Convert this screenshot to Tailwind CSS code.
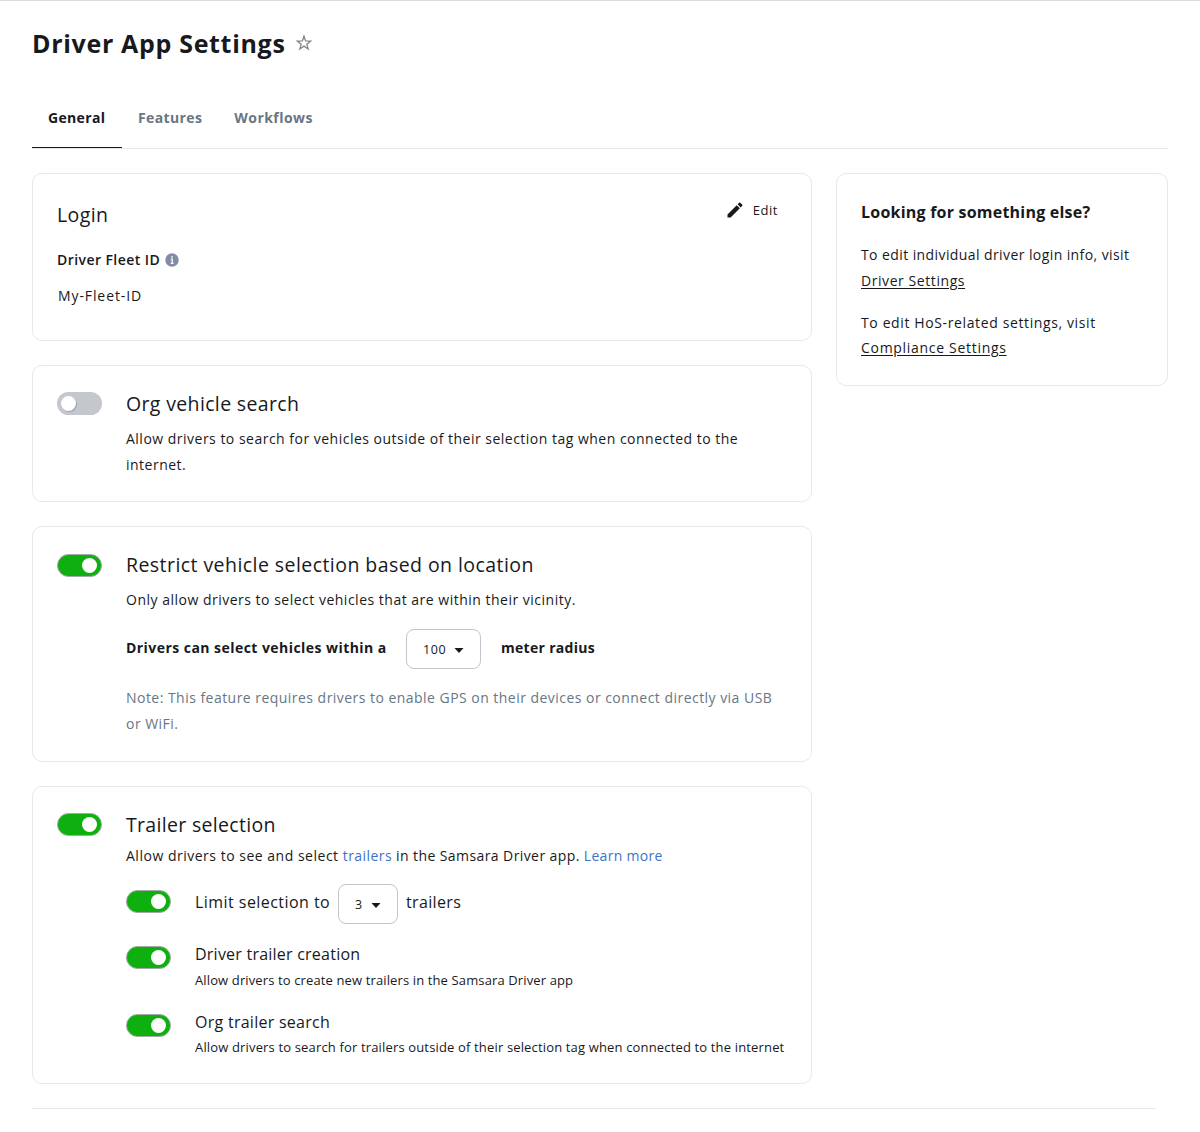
<!DOCTYPE html>
<html lang="en">
<head>
<meta charset="utf-8">
<title>Driver App Settings</title>
<script src="https://cdn.jsdelivr.net/npm/@tailwindcss/browser@4"></script>
</head>
<body class="bg-white">
<div class="flex h-[1132px] w-[1200px] flex-col overflow-hidden border-t border-[#dcdcdc] px-8 font-['Open_Sans',sans-serif] text-sm whitespace-nowrap text-[#17191d]">
  <header class="flex h-[88px] items-start pt-6">
    <h1 class="text-[25px] leading-9 font-bold tracking-[0.68px]">Driver App Settings</h1>
    <svg class="mt-[9px] ml-[10px] h-[18px] w-[18px]" viewBox="0 0 18 18" fill="none" stroke="#858585" stroke-width="1.3" stroke-linejoin="miter"><path d="M9 2.2l1.7 4.7 5 .15-3.95 3.1 1.4 4.8L9 12.1l-4.15 2.85 1.4-4.8-3.95-3.1 5-.15z"/></svg>
  </header>
  <nav class="flex h-[60px] border-b border-[#e6e9ec] font-semibold text-[#687684]">
    <a class="h-[59px] w-[90px] border-b border-[#17191d] pt-[19px] pl-4 leading-5 font-bold tracking-[0.33px] text-[#17191d]">General</a>
    <a class="ml-4 pt-[19px] leading-5 font-bold tracking-[0.38px]">Features</a>
    <a class="ml-8 pt-[19px] leading-5 font-bold tracking-[0.45px]">Workflows</a>
  </nav>

  <main class="mt-6 flex items-start gap-6">
    <div class="flex w-[780px] flex-col">
      <section class="flex h-[168px] justify-between rounded-[10px] border border-[#e8e9eb] pl-6">
        <div>
          <h2 class="mt-[27px] text-[19.5px] leading-7 tracking-[0.4px]">Login</h2>
          <div class="mt-[21px] flex items-center gap-[5px]">
            <span class="leading-5 font-semibold tracking-[0.43px]">Driver Fleet ID</span>
            <svg class="h-[14px] w-[14px]" viewBox="0 0 14 14"><circle cx="7" cy="7" r="6.7" fill="#7f8ca3"/><path d="M7 3.1v1.7M5.8 6.2H7.2v4M5.6 10.4h3" fill="none" stroke="#fff" stroke-width="1.3"/></svg>
          </div>
          <p class="mt-4 ml-px leading-5 tracking-[0.9px]">My-Fleet-ID</p>
        </div>
        <button class="mt-[26px] mr-[33px] flex h-5 items-center gap-2 text-[13px] leading-5 tracking-[0.55px]">
          <svg class="h-5 w-5" viewBox="0 0 24 24" fill="#17191d"><path d="M3 17.25V21h3.75L17.81 9.94l-3.75-3.75L3 17.25zM20.71 7.04a1 1 0 0 0 0-1.41l-2.34-2.34a1 1 0 0 0-1.41 0l-1.83 1.83 3.75 3.75 1.83-1.83z"/></svg>
          Edit
        </button>
      </section>

      <section class="mt-6 flex h-[137px] rounded-[10px] border border-[#e8e9eb] pl-6">
        <div class="mt-[26px] h-[23px] w-[45px] rounded-full bg-[#c4c7cc] p-[4px]"><div class="h-[15px] w-[15px] rounded-full bg-white shadow-[1px_1px_0_#94a3bd]"></div></div>
        <div class="ml-6">
          <h2 class="mt-6 text-[19.5px] leading-7 tracking-[0.35px]">Org vehicle search</h2>
          <p class="mt-2 leading-[26px] tracking-[0.49px]">Allow drivers to search for vehicles outside of their selection tag when connected to the<br>internet.</p>
        </div>
      </section>

      <section class="mt-6 flex h-[236px] rounded-[10px] border border-[#e8e9eb] pl-6">
        <div class="mt-[27px] flex h-[23px] w-[45px] justify-end rounded-full border border-[#a4aaa8] bg-[#0eb010] px-[4px] py-[3px]"><div class="h-[15px] w-[15px] rounded-full bg-white"></div></div>
        <div class="ml-6">
          <h2 class="mt-6 text-[19.5px] leading-7 tracking-[0.44px]">Restrict vehicle selection based on location</h2>
          <p class="mt-2 leading-[26px] tracking-[0.5px]">Only allow drivers to select vehicles that are within their vicinity.</p>
          <div class="mt-4 flex h-10 font-bold">
            <span class="w-[280px] pt-[9px] leading-5 tracking-[0.45px]">Drivers can select vehicles within a</span>
            <button class="flex h-10 w-[75px] items-center rounded-lg border border-[#c3c5cc] pt-0.5 pl-4 text-[12.5px] font-normal tracking-[0.65px]">100<svg class="ml-2 h-[5px] w-[10px]" viewBox="0 0 10 5" fill="#17191d"><path d="M.5 0h9L5 5z"/></svg></button>
            <span class="ml-5 pt-[9px] leading-5 tracking-[0.3px]">meter radius</span>
          </div>
          <p class="mt-4 leading-[26px] tracking-[0.465px] text-[#687684]">Note: This feature requires drivers to enable GPS on their devices or connect directly via USB<br>or WiFi.</p>
        </div>
      </section>

      <section class="mt-6 flex h-[298px] rounded-[10px] border border-[#e8e9eb] pl-6">
        <div class="mt-[26px] flex h-[23px] w-[45px] justify-end rounded-full border border-[#a4aaa8] bg-[#0eb010] px-[4px] py-[3px]"><div class="h-[15px] w-[15px] rounded-full bg-white"></div></div>
        <div class="ml-6">
          <h2 class="mt-6 text-[19.5px] leading-7 tracking-[0.32px]">Trailer selection</h2>
          <p class="mt-1 leading-[26px] tracking-[0.51px]">Allow drivers to see and select <a class="tracking-[0.43px] text-[#3d73c9]">trailers</a><span class="tracking-[0.41px]"> in the Samsara Driver app. </span><a class="tracking-[0.3px] text-[#3d73c9]">Learn more</a></p>
          <div class="mt-[15px] flex h-10 text-base">
            <div class="mt-[6px] flex h-[23px] w-[45px] justify-end rounded-full border border-[#a4aaa8] bg-[#0eb010] px-[4px] py-[3px]"><div class="h-[15px] w-[15px] rounded-full bg-white"></div></div>
            <span class="ml-6 w-[143px] pt-[6px] leading-6 tracking-[0.45px]">Limit selection to</span>
            <button class="flex h-10 w-[60px] items-center rounded-lg border border-[#c3c5cc] pt-0.5 pl-4 text-[12.5px]">3<svg class="ml-[9px] h-[5px] w-[10px]" viewBox="0 0 10 5" fill="#17191d"><path d="M.5 0h9L5 5z"/></svg></button>
            <span class="ml-2 pt-[6px] leading-6 tracking-[0.36px]">trailers</span>
          </div>
          <div class="mt-[18px] flex h-[68px]">
            <div class="mt-[4px] flex h-[23px] w-[45px] justify-end rounded-full border border-[#a4aaa8] bg-[#0eb010] px-[4px] py-[3px]"><div class="h-[15px] w-[15px] rounded-full bg-white"></div></div>
            <div class="ml-6">
              <h3 class="text-base leading-6 tracking-[0.23px]">Driver trailer creation</h3>
              <p class="mt-1 text-[13px] leading-5 tracking-[0.125px]">Allow drivers to create new trailers in the Samsara Driver app</p>
            </div>
          </div>
          <div class="flex">
            <div class="mt-[4px] flex h-[23px] w-[45px] justify-end rounded-full border border-[#a4aaa8] bg-[#0eb010] px-[4px] py-[3px]"><div class="h-[15px] w-[15px] rounded-full bg-white"></div></div>
            <div class="ml-6">
              <h3 class="text-base leading-6 tracking-[0.27px]">Org trailer search</h3>
              <p class="mt-[3px] text-[13px] leading-5 tracking-[0.155px]">Allow drivers to search for trailers outside of their selection tag when connected to the internet</p>
            </div>
          </div>
        </div>
      </section>
    </div>

    <aside class="h-[213px] w-[332px] rounded-[10px] border border-[#e8e9eb] pt-[26px] pl-6">
      <h2 class="text-base leading-6 font-bold tracking-[0.22px]">Looking for something else?</h2>
      <p class="mt-[18px] leading-[26px] tracking-[0.41px]">To edit individual driver login info, visit<br><a class="tracking-[0.57px] underline underline-offset-2">Driver Settings</a></p>
      <p class="mt-4 leading-[25px] tracking-[0.62px]">To edit HoS-related settings, visit<br><a class="tracking-[0.7px] underline underline-offset-2">Compliance Settings</a></p>
    </aside>
  </main>
  <div class="mt-6 mr-3 border-t border-[#e6e7ef]"></div>
</div>
</body>
</html>
